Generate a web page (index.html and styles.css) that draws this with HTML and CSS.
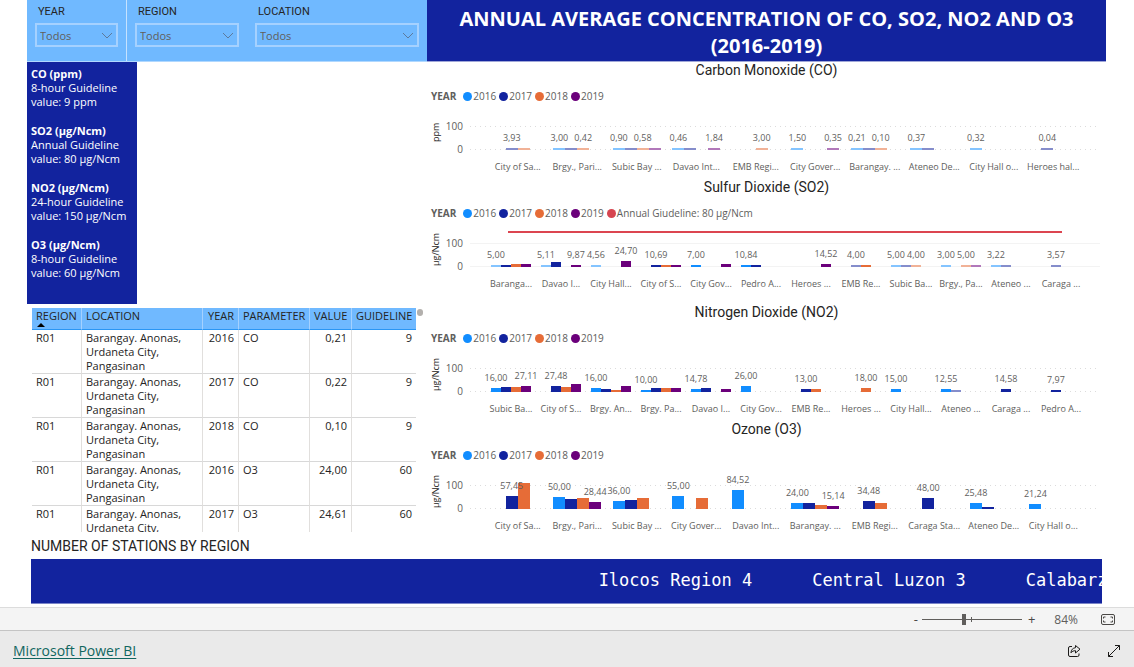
FILE: index.html
```
<!DOCTYPE html>
<html lang="en">
<head>
<meta charset="utf-8">
<title>Annual average concentration of CO, SO2, NO2 and O3</title>
<link rel="stylesheet" href="styles.css">
</head>
<body>
<main class="report">
  <header class="top">
    <form class="filters">
      <div class="filter">
        <label for="f-year">YEAR</label>
        <div class="select"><select id="f-year"><option>Todos</option></select>
          <svg viewBox="0 0 12 7" aria-hidden="true"><path d="M1 1l5 5 5-5"/></svg></div>
      </div>
      <div class="filter">
        <label for="f-region">REGION</label>
        <div class="select"><select id="f-region"><option>Todos</option></select>
          <svg viewBox="0 0 12 7" aria-hidden="true"><path d="M1 1l5 5 5-5"/></svg></div>
      </div>
      <div class="filter">
        <label for="f-location">LOCATION</label>
        <div class="select"><select id="f-location"><option>Todos</option></select>
          <svg viewBox="0 0 12 7" aria-hidden="true"><path d="M1 1l5 5 5-5"/></svg></div>
      </div>
    </form>
    <h1>ANNUAL AVERAGE CONCENTRATION OF CO, SO2, NO2 AND O3<br>(2016-2019)</h1>
  </header>

  <div class="content">
    <div class="left">
      <aside class="guidelines">
        <p><strong>CO (ppm)</strong><br>8-hour Guideline<br>value: 9 ppm</p>
        <p><strong>SO2 (µg/Ncm)</strong><br>Annual Guideline<br>value: 80 µg/Ncm</p>
        <p><strong>NO2 (µg/Ncm)</strong><br>24-hour Guideline<br>value: 150 µg/Ncm</p>
        <p><strong>O3 (µg/Ncm)</strong><br>8-hour Guideline<br>value: 60 µg/Ncm</p>
      </aside>
      <div class="table-wrap">
        <div class="table-clip">
          <table>
            <colgroup><col class="c-region"><col class="c-location"><col class="c-year"><col class="c-param"><col class="c-value"><col class="c-guide"></colgroup>
            <thead>
              <tr><th class="sorted">REGION</th><th>LOCATION</th><th class="num">YEAR</th><th>PARAMETER</th><th class="num">VALUE</th><th class="num">GUIDELINE</th></tr>
            </thead>
            <tbody>
              <tr><td>R01</td><td>Barangay. Anonas, Urdaneta City, Pangasinan</td><td class="num">2016</td><td>CO</td><td class="num">0,21</td><td class="num">9</td></tr>
              <tr><td>R01</td><td>Barangay. Anonas, Urdaneta City, Pangasinan</td><td class="num">2017</td><td>CO</td><td class="num">0,22</td><td class="num">9</td></tr>
              <tr><td>R01</td><td>Barangay. Anonas, Urdaneta City, Pangasinan</td><td class="num">2018</td><td>CO</td><td class="num">0,10</td><td class="num">9</td></tr>
              <tr><td>R01</td><td>Barangay. Anonas, Urdaneta City, Pangasinan</td><td class="num">2016</td><td>O3</td><td class="num">24,00</td><td class="num">60</td></tr>
              <tr><td>R01</td><td>Barangay. Anonas, Urdaneta City, Pangasinan</td><td class="num">2017</td><td>O3</td><td class="num">24,61</td><td class="num">60</td></tr>
            </tbody>
          </table>
        </div>
        <span class="scroll-dot"></span>
      </div>
    </div>
    <div class="charts" id="charts"></div>
  </div>

  <section class="stations">
    <h2>NUMBER OF STATIONS BY REGION</h2>
    <div class="ticker"><span>Ilocos Region 4</span><span>Central Luzon 3</span><span>Calabarzon 3</span></div>
  </section>
</main>

<div class="status">
  <button type="button" aria-label="Zoom out">-</button>
  <input type="range" min="0" max="100" value="42" aria-label="Zoom">
  <button type="button" aria-label="Zoom in">+</button>
  <span class="percent">84%</span>
  <button type="button" class="fit" aria-label="Fit to page">
    <svg viewBox="0 0 14 11"><rect x=".5" y=".5" width="13" height="10" rx="1.5"/><path d="M2.500 4.500V3h2M9.500 3h2v1.500M11.500 6.500V8h-2M4.500 8h-2V6.500"/></svg>
  </button>
</div>
<footer class="footer">
  <a href="#">Microsoft Power BI</a>
  <div class="actions">
    <button type="button" aria-label="Share"><svg viewBox="0 0 14 14"><path d="M5 2.500H3A1.500 1.500 0 0 0 1.500 4v7A1.500 1.500 0 0 0 3 12.500h7.500A1.500 1.500 0 0 0 12 11V9.500"/><path d="M8.500 1.500l4.500 3.700L8.500 9V6.700C6.500 6.700 5 7.300 4 8.800c0-3 2-4.900 4.500-5.100z"/></svg></button>
    <button type="button" aria-label="Full screen"><svg viewBox="0 0 14 14"><path d="M1.500 12.500l11-11M8 1.500h4.500V6M1.500 8v4.500H6"/></svg></button>
  </div>
</footer>
<script src="charts.js"></script>
</body>
</html>
```
FILE: styles.css
```
* { box-sizing: border-box; }

body {
  margin: 0;
  min-height: 100vh;
  display: flex;
  flex-direction: column;
  background: #fff;
  color: #252423;
  font-family: "Open Sans", "Noto Sans", sans-serif;
  font-size: 11px;
}

button {
  border: 0;
  padding: 0;
  background: none;
  font: inherit;
  color: inherit;
  cursor: pointer;
}

.report {
  flex: 1;
  padding: 0 28px 3px 27px;
}

/* Header */
.top,
.content {
  display: grid;
  grid-template-columns: minmax(0, 400fr) minmax(0, 679fr);
}

.filters {
  display: grid;
  grid-template-columns: 100fr 120fr 180fr;
  background: #70b9ff;
  border-bottom: 1px solid #b0d8ff;
}

.filter { padding: 4px 8px 0; }
.filter:first-child { border-right: 1px solid #c5e2ff; }

.filter label {
  display: block;
  padding-left: 3px;
  font: 11px/15px Roboto, sans-serif;
  color: #252423;
}

.select { position: relative; margin-top: 4px; }

.select select {
  display: block;
  width: 100%;
  height: 24px;
  padding: 1px 3px 0;
  appearance: none;
  border: 2px solid #a5d1ff;
  border-radius: 0;
  background: transparent;
  color: #605e5c;
  font: 11px/16px "Open Sans", sans-serif;
}

.select svg {
  position: absolute;
  right: 5px;
  top: 9px;
  width: 12px;
  height: 7px;
  fill: none;
  stroke: #5d7a9c;
  pointer-events: none;
}

h1 {
  margin: 0;
  padding: 5px 24px 2px;
  background: #12239e;
  border-bottom: 1px solid #a0a7d8;
  color: #fff;
  font-size: 20px;
  line-height: 27px;
  font-weight: 700;
  text-align: center;
}

/* Left column */
.left {
  display: flex;
  flex-direction: column;
  align-items: flex-start;
}

.guidelines {
  width: 110px;
  padding: 5px 4px 24px;
  background: #12239e;
  color: #fff;
  font-size: 11px;
  line-height: 14px;
}

.guidelines p { margin: 0 0 15px; white-space: nowrap; }
.guidelines p:last-child { margin-bottom: 0; }

.table-wrap {
  display: flex;
  width: 100%;
  gap: 1px;
  padding: 4px 4px 0 5px;
}

.table-clip {
  width: 384px;
  height: 224px;
  overflow: hidden;
}

.scroll-dot {
  width: 6px;
  height: 7px;
  margin-top: 1px;
  border-radius: 3px;
  background: #b3b0ad;
}

table {
  width: 100%;
  table-layout: fixed;
  border-collapse: separate;
  border-spacing: 0;
}

.c-region { width: 50px; }
.c-location { width: 121px; }
.c-year { width: 36px; }
.c-param { width: 71px; }
.c-value { width: 42px; }

th {
  height: 22px;
  padding: 1px 4px 6px;
  background: #70b9ff;
  border-right: 1px solid #a5d1ff;
  border-bottom: 1px solid #2a96f5;
  font-weight: 400;
  line-height: 14px;
  text-align: left;
  white-space: nowrap;
}

.sorted { position: relative; }
.sorted::after {
  content: "";
  position: absolute;
  left: 5px;
  bottom: 2px;
  border: 4px solid transparent;
  border-top: 0;
  border-bottom-color: #000;
}

td {
  padding: 1px 4px 0;
  border-right: 1px solid #e1dfdd;
  border-bottom: 1px solid #d8d8d8;
  line-height: 14px;
  vertical-align: top;
}

th:last-child,
td:last-child { border-right: 0; }
.num { text-align: right; }

/* Charts */
.chart {
  height: 117px;
  color: #605e5c;
  font-size: 9px;
}

.chart.tall { height: 125px; }

.chart h2 {
  margin: 0;
  color: #252423;
  font: 14px/17px Roboto, sans-serif;
  text-align: center;
}

.legend {
  display: flex;
  align-items: center;
  gap: 3px;
  height: 16px;
  margin: 9px 0 0 4px;
  font-size: 10px;
}

.legend strong { margin-right: 4px; }
.legend span { display: flex; align-items: center; gap: 1px; }
.legend i { width: 9px; height: 9px; border-radius: 50%; }

.plot-row {
  display: grid;
  grid-template-columns: 18px 18px minmax(0, 1fr);
  margin-top: 22px;
  padding-right: 6px;
}

.axis-title {
  align-self: center;
  justify-self: center;
  height: 10px;
  margin-bottom: 12px;
  display: flex;
  align-items: center;
  justify-content: center;
  line-height: 10px;
  writing-mode: vertical-rl;
  transform: rotate(180deg);
  color: #252423;
}

.ticks {
  display: flex;
  flex-direction: column;
  justify-content: space-between;
  height: 35px;
  margin: -6px 0;
  line-height: 12px;
  font-size: 10px;
  text-align: right;
}

.plot {
  position: relative;
  display: flex;
  height: 24px;
  margin-left: 7px;
  padding: 0 17px 0 18px;
  background:
    repeating-linear-gradient(90deg, #dcdcdc 0 1px, transparent 1px 5px) 0 0 / 100% 1px no-repeat,
    repeating-linear-gradient(90deg, #dcdcdc 0 1px, transparent 1px 5px) 0 100% / 100% 1px no-repeat;
}

.plot.dense { padding: 0 14px 0 16px; }

.plot.solid {
  background:
    linear-gradient(#f3f3f3, #f3f3f3) 0 0 / 100% 1px no-repeat,
    linear-gradient(#f3f3f3, #f3f3f3) 0 100% / 100% 1px no-repeat;
}

.group {
  position: relative;
  flex: 1 1 0;
  min-width: 0;
  display: grid;
  grid-template-columns: 1fr repeat(4, minmax(0, 2fr)) 1fr;
  grid-template-rows: 24px;
  align-items: end;
}

.bar { position: relative; z-index: 1; }
.bar.y2016 { grid-column: 2; }
.bar.y2017 { grid-column: 3; }
.bar.y2018 { grid-column: 4; }
.bar.y2019 { grid-column: 5; }
.bar.labelled { z-index: 2; }

.value {
  position: absolute;
  left: 50%;
  bottom: 100%;
  margin-bottom: 4px;
  line-height: 12px;
  transform: translateX(-50%);
}

.category {
  position: absolute;
  top: 35px;
  left: 50%;
  line-height: 12px;
  white-space: nowrap;
  transform: translateX(-50%);
}

.guide-line {
  position: absolute;
  top: -12px;
  left: 6%;
  right: 6%;
  height: 2px;
  background: #dc4550;
}

.y2016 { background: #118dff; }
.y2017 { background: #12239e; }
.y2018 { background: #e66c37; }
.y2019 { background: #6b007b; }
.guide { background: #d64550; }
.y2016.low { background: #84c4ff; }
.y2017.low { background: #858dcb; }
.y2018.low { background: #f1b297; }
.y2019.low { background: #b178ba; }

/* Stations ticker */
.stations { padding: 0 4px; }

.stations h2 {
  margin: 0;
  padding-bottom: 5px;
  font: 14px/16px Roboto, sans-serif;
}

.ticker {
  display: flex;
  gap: 60px;
  height: 45px;
  padding: 0 0 2px 53%;
  align-items: center;
  overflow: hidden;
  background: #12239e;
  border-bottom: 1px solid #7a84c8;
  color: #fff;
  font: 17px/24px "DejaVu Sans Mono", monospace;
  white-space: nowrap;
}

.ticker span { flex: none; }

/* Status bar and footer */
.status {
  display: flex;
  align-items: center;
  justify-content: flex-end;
  height: 23px;
  padding-right: 19px;
  background: #f4f4f4;
  border-top: 1px solid #dcdcdc;
  color: #4a4846;
}

.status button { font-size: 13px; line-height: 16px; }

.status input {
  width: 100px;
  height: 12px;
  margin: 0 6px 0 4px;
  appearance: none;
  background:
    linear-gradient(#605e5c, #605e5c) 50% 50% / 1px 5px no-repeat,
    linear-gradient(#605e5c, #605e5c) 0 50% / 100% 1px no-repeat;
}

.status input::-webkit-slider-thumb {
  appearance: none;
  width: 4px;
  height: 11px;
  background: #605e5c;
}

.percent { margin: 0 23px 0 19px; color: #605e5c; font-size: 12px; }
.fit { display: flex; }
.fit svg { width: 14px; height: 11px; fill: none; stroke: #4a4846; }

.footer {
  display: flex;
  align-items: center;
  justify-content: space-between;
  height: 37px;
  padding: 4px 13px 0;
  background: #eaeaea;
  border-top: 1px solid #c4c4c4;
}

.footer a {
  color: #106660;
  font-size: 14px;
  line-height: 20px;
  text-underline-offset: 2px;
}

.actions { display: flex; gap: 26px; }
.actions button { display: flex; }
.actions svg { width: 14px; height: 14px; fill: none; stroke: #1b1a19; stroke-linejoin: round; }
```
FILE: charts.js
```
const YEARS = ["2016", "2017", "2018", "2019"];
const PX_PER_UNIT = 0.23;

// Each category: name, values for 2016-2019, and the years whose value is labelled.
const CHARTS = [
  { title: "Carbon Monoxide (CO)", unit: "ppm", data: [
    ["City of Sa...", [null, 3.93, 3, null], [1]],
    ["Brgy., Pari...", [3, 1, 0.42, null], [0, 2]],
    ["Subic Bay ...", [0.9, 0.7, 0.58, 0.5], [0, 2]],
    ["Davao Int...", [0.46, 0.5, null, 1.84], [0, 3]],
    ["EMB Regi...", [null, null, 3, null], [2]],
    ["City Gover...", [1.5, null, null, 0.35], [0, 3]],
    ["Barangay. ...", [0.21, 0.22, 0.1, null], [0, 2]],
    ["Ateneo De...", [0.37, 0.3, null, null], [0]],
    ["City Hall o...", [0.32, null, null, null], [0]],
    ["Heroes hal...", [null, 0.04, null, null], [1]]
  ]},
  { title: "Sulfur Dioxide (SO2)", unit: "µg/Ncm", guide: "Annual Giudeline: 80 µg/Ncm", data: [
    ["Baranga...", [5, 7, 13, 12], [0]],
    ["Davao I...", [5.11, 22, null, 9.87], [0, 3]],
    ["City Hall...", [4.56, null, null, 24.7], [0, 3]],
    ["City of S...", [null, 10.69, 7, 6], [1]],
    ["City Gov...", [7, null, null, 15], [0]],
    ["Pedro A...", [10.84, 8, null, null], [0]],
    ["Heroes ...", [null, null, null, 14.52], [3]],
    ["EMB Re...", [null, 4, 10, null], [1]],
    ["Subic Ba...", [5, 4, 4, null], [0, 2]],
    ["Brgy., Pa...", [3, null, 5, 4], [0, 2]],
    ["Ateneo ...", [3.22, 4, null, null], [0]],
    ["Caraga ...", [null, 3.57, null, null], [1]]
  ]},
  { title: "Nitrogen Dioxide (NO2)", unit: "µg/Ncm", data: [
    ["Subic Ba...", [16, 22, 23, 27.11], [0, 3]],
    ["City of S...", [null, 27.48, 20, 36], [1]],
    ["Brgy. An...", [16, 13, 8, 27], [0]],
    ["Brgy. Pa...", [10, 18, 16, 18], [0]],
    ["Davao I...", [14.78, 17, null, 11], [0]],
    ["City Gov...", [26, null, null, null], [0]],
    ["EMB Re...", [null, 13, 14, null], [1]],
    ["Heroes ...", [null, null, 18, null], [2]],
    ["City Hall...", [15, null, null, null], [0]],
    ["Ateneo ...", [12.55, 4, null, null], [0]],
    ["Caraga ...", [null, 14.58, null, null], [1]],
    ["Pedro A...", [null, 7.97, null, null], [1]]
  ]},
  { title: "Ozone (O3)", unit: "µg/Ncm", data: [
    ["City of Sa...", [null, 57.45, 112, null], [1]],
    ["Brgy., Pari...", [50, 42, 47, 28.44], [0, 3]],
    ["Subic Bay ...", [36, 40, 46, null], [0]],
    ["City Gover...", [55, null, 46, null], [0]],
    ["Davao Int...", [84.52, null, null, null], [0]],
    ["Barangay. ...", [24, 26, 19, 15.14], [0, 3]],
    ["EMB Regi...", [null, 34.48, 25, null], [1]],
    ["Caraga Sta...", [null, 48, null, null], [1]],
    ["Ateneo De...", [25.48, 6, null, null], [0]],
    ["City Hall o...", [21.24, null, null, null], [0]]
  ]}
];

function el(tag, className, parent, text) {
  const node = document.createElement(tag);
  if (className) node.className = className;
  if (text) node.textContent = text;
  parent.append(node);
  return node;
}

for (const chart of CHARTS) {
  const section = el("section", chart.guide ? "chart tall" : "chart", document.getElementById("charts"));
  el("h2", "", section, chart.title);

  const legend = el("div", "legend", section);
  el("strong", "", legend, "YEAR");
  for (const year of YEARS) {
    const item = el("span", "", legend);
    el("i", "y" + year, item);
    item.append(year);
  }
  if (chart.guide) {
    const item = el("span", "", legend);
    el("i", "guide", item);
    item.append(chart.guide);
  }

  const row = el("div", "plot-row", section);
  el("div", "axis-title", row, chart.unit);
  const ticks = el("div", "ticks", row);
  el("span", "", ticks, "100");
  el("span", "", ticks, "0");

  const plot = el("div", "plot", row);
  if (chart.data.length > 10) plot.classList.add("dense");
  if (chart.guide) {
    plot.classList.add("solid");
    el("div", "guide-line", plot);
  }
  for (const [name, values, labelled] of chart.data) {
    const group = el("div", "group", plot);
    values.forEach((value, i) => {
      if (value === null) return;
      const bar = el("div", "bar y" + YEARS[i], group);
      bar.style.gridRow = 1;
      bar.style.height = Math.max(2, Math.round(value * PX_PER_UNIT)) + "px";
      if (value < 5.5) bar.classList.add("low");
      if (labelled.includes(i)) {
        bar.classList.add("labelled");
        el("span", "value", bar, value.toFixed(2).replace(".", ","));
      }
    });
    el("span", "category", group, name);
  }
}
```
